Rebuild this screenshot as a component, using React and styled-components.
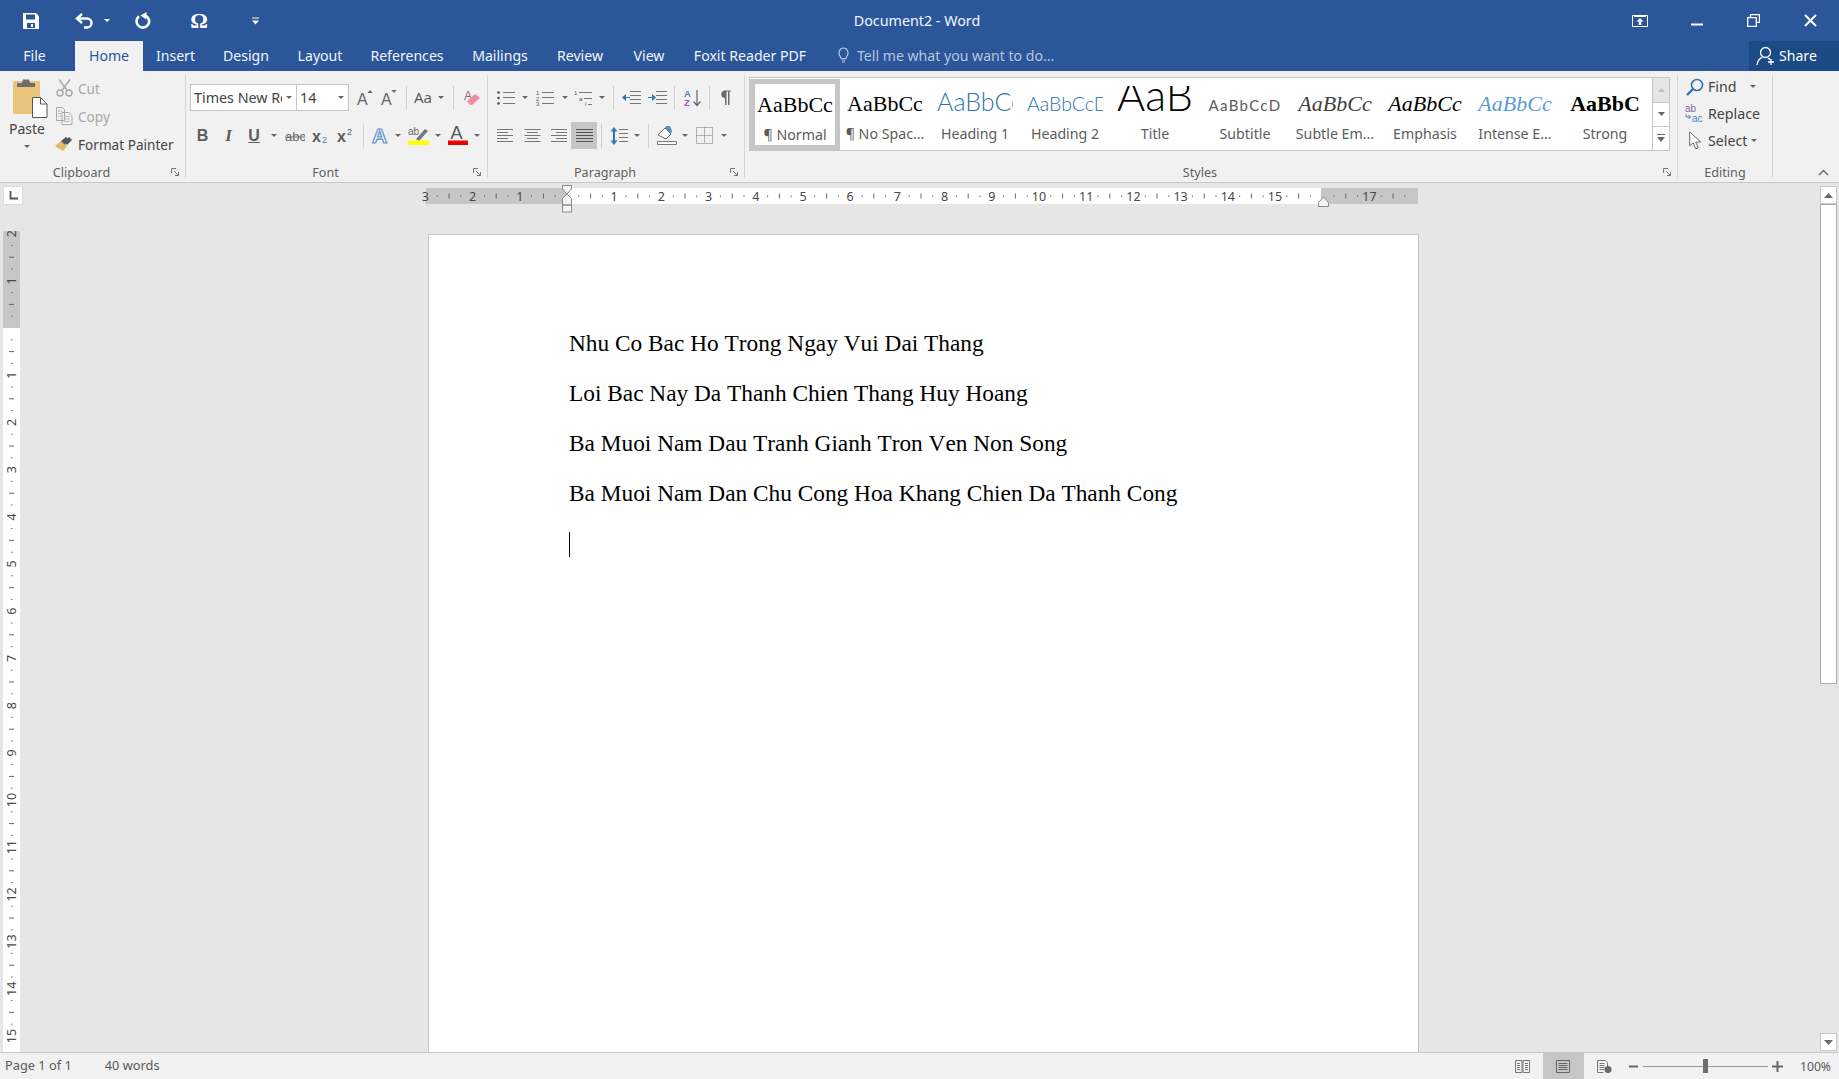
import React from "react";
import styled, { createGlobalStyle } from "styled-components";

const Global = createGlobalStyle`
  html, body { margin: 0; padding: 0; height: 100%; overflow: hidden; }
  body { font-family: "Noto Sans", "Open Sans", sans-serif; font-size: 13px; color: #444; }
  #root { height: 100%; }
`;

const Shell = styled.div`display:flex;flex-direction:column;height:1079px;width:1839px;overflow:hidden;background:#e6e6e6;`;

/* Title bar */
const TitleBar = styled.header`display:grid;grid-template-columns:1fr auto 1fr;align-items:center;height:41px;background:#2b579a;color:#fff;`;
const Qat = styled.div`display:flex;align-items:center;padding-left:17px;`;
const QatBtn = styled.span`display:flex;align-items:center;justify-content:center;width:${p=>p.$w||28}px;margin-left:${p=>p.$ml||0}px;height:30px;`;
const DocTitle = styled.div`font-size:14.3px;color:#f2f5fa;padding-right:5px;`;
const WinBtns = styled.div`display:flex;justify-content:flex-end;`;
const WinBtn = styled.span`display:flex;align-items:center;justify-content:center;width:57px;height:38px;`;
const OmegaGlyph = styled.span`font-family:"Liberation Serif",serif;font-weight:700;font-size:22px;color:#fff;line-height:1;`;

/* Tabs */
const TabRow = styled.nav`display:flex;align-items:stretch;height:30px;background:#2b579a;`;
const Tab = styled.span`display:flex;align-items:center;justify-content:center;box-sizing:border-box;padding-bottom:2px;width:${p=>p.$w}px;margin-right:${p=>p.$mr||0}px;font-size:14.1px;color:${p=>p.$on?'#2b579a':'#f1f4f9'};background:${p=>p.$on?'#f1f1f1':'transparent'};`;
const TellMe = styled.span`display:flex;align-items:center;gap:8px;margin-left:18px;padding-bottom:2px;font-size:14.1px;color:#b6c6df;`;
const Share = styled.span`display:flex;align-items:center;gap:3px;margin-left:auto;width:90px;padding:0 0 1px 7px;box-sizing:border-box;background:#1b4a85;color:#fff;font-size:14.1px;`;

/* Ribbon */
const Ribbon = styled.section`display:flex;height:112px;box-sizing:border-box;background:#f1f1f1;border-bottom:1px solid #c8c8c8;`;
const Group = styled.div`display:flex;flex-direction:column;flex:none;width:${p=>p.$w}px;`;
const GroupBody = styled.div`flex:1;min-height:0;padding:${p=>p.$pad||'13px 0 0 4px'};`;
const GroupFooter = styled.div`display:flex;align-items:center;height:20px;`;
const GroupLabel = styled.span`flex:1;text-align:center;font-size:12.6px;color:#5f5f5f;`;
const Launcher = styled.span`display:flex;align-items:center;justify-content:flex-end;box-sizing:border-box;width:22px;padding-right:6px;`;
const GroupDivider = styled.span`flex:none;width:1px;margin:4px 0;background:#d6d6d6;`;
const RibbonTail = styled.div`flex:1;display:flex;justify-content:flex-end;align-items:flex-end;padding:0 10px 6px 0;`;

const ClipLayout = styled.div`display:flex;`;
const PasteCol = styled.div`display:flex;flex-direction:column;align-items:center;width:54px;padding-top:8px;font-size:14px;color:#444;`;
const PasteArt = styled.span`display:block;margin-left:6px;`;
const PasteLabel = styled.span`margin:1px 0 6px;line-height:20px;`;
const ClipCol = styled.div`display:flex;flex-direction:column;padding-top:3px;`;
const ClipRow = styled.div`display:flex;align-items:center;height:28px;gap:5px;font-size:13.6px;color:${p=>p.$off?'#a8a8a8':'#444'};`;
const ClipIcon = styled.span`display:flex;justify-content:center;width:18px;margin-left:1px;`;

const ToolRow = styled.div`display:flex;height:27px;margin-bottom:11px;`;
const Tool = styled.span`display:flex;align-items:center;justify-content:center;flex:none;width:${p=>p.$w}px;height:27px;margin-left:${p=>p.$ml||0}px;background:${p=>p.$on?'#c6c6c6':'transparent'};`;
const Sep = styled.span`display:flex;align-items:center;justify-content:center;flex:none;width:${p=>p.$w}px;&::before{content:"";width:1px;height:24px;background:#d2d2d2;}`;
const Caret = styled.i`display:block;flex:none;width:0;height:0;border-left:3px solid transparent;border-right:3px solid transparent;border-top:3px solid ${p=>p.$c||'#666'};`;
const Combo = styled.span`display:flex;align-items:center;flex:none;box-sizing:border-box;width:${p=>p.$w}px;height:27px;margin-left:${p=>p.$ml||0}px;padding:0 4px 0 3px;background:#fff;border:1px solid #c6c6c6;font-size:14.3px;color:#444;`;
const ComboText = styled.span`flex:1;min-width:0;margin-right:4px;overflow:hidden;white-space:nowrap;`;
const GlyphBtn = styled.span`font-family:${p=>p.$sans?'"Noto Sans",sans-serif':p.$serif?'"Liberation Serif",serif':'"Liberation Sans",sans-serif'};font-weight:${p=>p.$b?700:400};font-style:${p=>p.$i?'italic':'normal'};text-decoration:${p=>p.$u?'underline':'none'};font-size:${p=>p.$s||15}px;color:#5c5c5c;line-height:1;`;

/* Styles gallery */
const Gallery = styled.div`display:flex;width:921px;height:74px;box-sizing:border-box;background:#fff;border:1px solid #c6c6c6;`;
const StyleItem = styled.div`display:flex;flex-direction:column;align-items:center;flex:none;box-sizing:border-box;width:90px;height:${p=>p.$on?'71px':'72px'};padding-top:${p=>p.$on?'3px':'8px'};border:${p=>p.$on?'5px solid #c6c6c6':'0'};margin-top:${p=>p.$on?'1px':'0'};`;
const SampleBox = styled.div`width:76px;height:34px;overflow:hidden;white-space:nowrap;text-align:center;font-size:20px;line-height:35px;`;
const Sample = styled.span`line-height:0;font-family:${p=>p.$f};font-size:${p=>p.$s}px;font-weight:${p=>p.$b||400};font-style:${p=>p.$i?'italic':'normal'};color:${p=>p.$c};letter-spacing:${p=>p.$ls||0}px;`;
const StyleLabel = styled.div`margin-top:4px;font-size:14.2px;color:#5c5c5c;white-space:nowrap;line-height:20px;`;
const GalleryScroll = styled.div`display:flex;flex-direction:column;margin-left:2px;width:17px;border-left:1px solid #c6c6c6;`;
const ScrollCell = styled.span`display:flex;align-items:center;justify-content:center;height:${p=>p.$h}px;background:${p=>p.$off?'#e6e6e6':'#fff'};border-bottom:${p=>p.$last?'0':'1px solid #c6c6c6'};`;

const EditCol = styled.div`display:flex;flex-direction:column;padding:2px 0 0 8px;`;
const EditRow = styled.div`display:flex;align-items:center;height:27px;gap:4px;font-size:14.2px;color:#444;`;
const EditIcon = styled.span`display:flex;justify-content:center;width:18px;`;

/* Workspace */
const Workspace = styled.main`flex:1;min-height:0;display:flex;background:#e6e6e6;overflow:hidden;`;
const LeftRail = styled.div`display:flex;flex-direction:column;flex:none;width:24px;`;
const CornerBtn = styled.span`display:flex;align-items:center;justify-content:center;width:18px;height:17px;margin:3px 0 0 3px;background:#fff;border:1px solid #dcdcdc;`;
const VRulerWrap = styled.div`flex:1;min-height:0;margin:26px 0 0 3px;overflow:hidden;`;
const Center = styled.div`flex:1;min-width:0;display:flex;flex-direction:column;padding-left:401px;`;
const HRulerWrap = styled.div`height:30px;margin-top:1px;flex:none;`;
const Page = styled.article`flex:1;box-sizing:border-box;width:991px;margin:20px 0 0 3px;padding:83px 0 0 140px;background:#fff;border:1px solid #c6c6c6;border-bottom:0;font-family:"Liberation Serif",serif;font-size:23.33px;font-kerning:none;color:#000;`;
const Para = styled.p`margin:0;height:50px;line-height:50px;white-space:nowrap;`;
const Caretline = styled.span`display:block;width:1px;height:25px;margin-top:14px;background:#000;`;
const VScroll = styled.aside`display:flex;flex-direction:column;flex:none;width:17px;margin:3px 2px 1px 0;`;
const ScrollBtn = styled.span`display:flex;align-items:center;justify-content:center;flex:none;box-sizing:border-box;height:18px;background:#fff;border:1px solid #c6c6c6;`;
const ScrollThumb = styled.span`display:block;flex:none;box-sizing:border-box;height:480px;background:#fff;border:1px solid #ababab;`;
const ScrollGap = styled.span`flex:1;`;

/* Status */
const Status = styled.footer`display:flex;align-items:center;height:27px;box-sizing:border-box;padding:0 0 0 5px;background:#f1f1f1;border-top:1px solid #c6c6c6;font-size:12.8px;color:#5a5a5a;`;
const StatusText = styled.span`margin-left:${p=>p.$ml||0}px;padding-bottom:2px;`;
const StatusRight = styled.div`display:flex;align-items:stretch;height:26px;margin-left:auto;padding-right:8px;`;
const StatusBtn = styled.span`display:flex;align-items:center;justify-content:center;flex:none;width:${p=>p.$w||41}px;background:${p=>p.$on?'#c6c6c6':'transparent'};`;
const Slider = styled.span`display:flex;align-items:center;justify-content:center;width:125px;background:linear-gradient(#9a9a9a,#9a9a9a) center/100% 1px no-repeat;`;
const SliderThumb = styled.span`display:block;width:5px;height:14px;background:#6f6f6f;`;
const Zoom = styled.span`display:flex;align-items:center;margin-left:12px;font-size:12.2px;`;

/* Icons */
const Ic = ({w=16,h=16,children,vb})=> <svg width={w} height={h} viewBox={vb||`0 0 ${w} ${h}`} style={{display:"block",flex:"none"}}>{children}</svg>;

const SaveIcon = ()=> <Ic><path fill="#fff" fillRule="evenodd" d="M0 0h13l3 3v13H0zM3 1.500v5h9v-5zM4 10v5h8v-5zM8 11h2v3H8z"/></Ic>;
const UndoIcon = ()=> <Ic w={19} h={17}><path d="M7 2 2 6.500 7 11" fill="none" stroke="#fff" strokeWidth="2.400"/><path d="M3 6.500h9a4.500 4.500 0 0 1 0 9H9" fill="none" stroke="#fff" strokeWidth="2.400"/></Ic>;
const RedoIcon = ()=> <Ic w={17} h={17}><path d="M5 4.300a6.300 6.300 0 1 0 6.500-.7" fill="none" stroke="#fff" strokeWidth="2.600"/><path d="M12.500 0v7.500L6.500 3.500z" fill="#fff"/></Ic>;
const CustomIcon = ()=> <Ic w={7} h={8}><path d="M0 1h7" stroke="#fff"/><path d="M0 3.500h7L3.500 7.500z" fill="#fff"/></Ic>;
const DisplayIcon = ()=> <Ic w={16} h={12}><path d="M.5.500h15v11H.5z" fill="none" stroke="#fff"/><path d="M2 1.500h12" stroke="#fff"/><path d="M8 3l3.500 3.500H9.300V10H6.700V6.500H4.500z" fill="#fff"/></Ic>;
const MinIcon = ()=> <Ic w={12} h={12}><path d="M0 9.500h12" stroke="#fff" strokeWidth="2"/></Ic>;
const RestoreIcon = ()=> <Ic w={13} h={13}><path d="M3.500 3V.7h9v7.600H9.600M.7 3.700h8.600v8.600H.7z" fill="none" stroke="#fff" strokeWidth="1.300"/></Ic>;
const CloseIcon = ()=> <Ic w={13} h={13}><path d="M1 1l11 11M12 1 1 12" stroke="#fff" strokeWidth="2"/></Ic>;
const BulbIcon = ()=> <Ic w={11} h={16}><path d="M2.500 10C-.5 6 1.500 1 5.500 1s6 5 3 9l-.5 1.500H3z" fill="none" stroke="#b6c6df" strokeWidth="1.200"/><path d="M3.500 13h4M4 15h3" stroke="#b6c6df"/></Ic>;
const ShareIcon = ()=> <Ic w={20} h={20}><circle cx="9.500" cy="6.500" r="5" fill="none" stroke="#fff" strokeWidth="1.300"/><path d="M1 19c.5-4 2.500-6.500 5-7.700M12 12.200c1 .4 1.800 1 2.500 1.800" fill="none" stroke="#fff" strokeWidth="1.300"/><path d="M15 13v6M12 16h6" stroke="#fff" strokeWidth="1.300"/></Ic>;

const PasteIcon = ()=> <Ic w={35} h={39}>
  <rect x="0" y="2" width="27" height="33" rx="1.500" fill="#ebc47c"/>
  <path d="M4 4h5l1-3.500h6L17 4h5v4H4z" fill="#6d6d6d"/>
  <path d="M19.500 18.500h8l6.500 6.500v13.500H19.500z" fill="#fff" stroke="#555"/>
  <path d="M27.500 18.500v6.500h6.500" fill="none" stroke="#555"/>
</Ic>;
const CutIcon = ()=> <Ic w={17} h={18}><circle cx="4" cy="14" r="3" fill="none" stroke="#a8a8a8" strokeWidth="1.400"/><circle cx="13" cy="14" r="3" fill="none" stroke="#a8a8a8" strokeWidth="1.400"/><path d="M3 .5l8.500 11.500M14 .5 5.500 12" stroke="#a8a8a8" strokeWidth="1.400"/></Ic>;
const CopyIcon = ()=> <Ic w={17} h={18}><path d="M.5.500h6l2 2v11H.5zM6 5.500h7l3 3v9H6z" fill="#f1f1f1" stroke="#a8a8a8"/><path d="M2 4h4M2 6.500h3M2 9h3M8 9.500h6M8 12h6M8 14.500h6" stroke="#bbb"/></Ic>;
const PainterIcon = ()=> <Ic w={18} h={16}><path d="M0 10l6-5 6 5-4 5z" fill="#e2b867"/><path d="M6 5l5-4 1.500 1L10 9z" fill="#555"/><path d="M9 6l5-5 3 3-5 5z" fill="#555"/></Ic>;
const GrowIcon = ({down})=> <Ic w={16} h={19}><text x="0" y="17" fontFamily="Liberation Sans" fontSize="16" fill="#666">A</text><path d={down?"M10.500 2h5L13 5z":"M10.500 5h5L13 2z"} fill="#666"/></Ic>;
const ClearIcon = ()=> <Ic w={17} h={18}><text x="0" y="11" fontFamily="Liberation Sans" fontSize="12" fill="#777">A</text><path d="M3 12l8-7 5 4-8 7H6z" fill="#ef8d9c"/></Ic>;
const SubIcon = ({sup})=> <Ic w={16} h={16}><text x="0" y="14" fontFamily="Liberation Sans" fontWeight="700" fontSize="16" fill="#5c5c5c">x</text><text x="10" y={sup?7:15} fontFamily="Liberation Sans" fontSize="9" fill={sup?"#5c5c5c":"#5b7fa8"}>2</text></Ic>;
const StrikeIcon = ()=> <Ic w={20} h={14}><text x="0" y="12" fontFamily="Liberation Sans" fontSize="13" fill="#6a6a6a">abc</text><path d="M0 8h20" stroke="#6a6a6a"/></Ic>;
const EffectIcon = ()=> <Ic w={18} h={20}><text x="0" y="17" fontFamily="Liberation Sans" fontWeight="700" fontSize="21" fill="#fff" stroke="#5b8fc9" strokeWidth="1.200">A</text></Ic>;
const HiliteIcon = ()=> <Ic w={21} h={19}><text x="0" y="9" fontFamily="Liberation Sans" fontSize="10" fill="#666">ab</text><path d="M8 13 17 3l3 2-9 10z" fill="#777"/><path d="M0 14.500h21V19H0z" fill="#ffff00"/></Ic>;
const ColorIcon = ()=> <Ic w={20} h={19}><text x="2.500" y="13" fontFamily="Liberation Sans" fontSize="18" fill="#555">A</text><path d="M0 14.500h20V19H0z" fill="#f00000"/></Ic>;

const Lines = ({x,ys,l,c="#777"})=> <>{ys.map((y,i)=><path key={i} d={`M${x} ${y+.5}h${l}`} stroke={c}/>)}</>;
const Tiny = ({x,y,t,c="#555"})=> <text x={x} y={y} fontFamily="Liberation Sans" fontSize="6" fill={c}>{t}</text>;
const BulletIcon = ()=> <Ic w={18} h={16}><circle cx="1.500" cy="2.500" r="1.300" fill="#44546a"/><circle cx="1.500" cy="8" r="1.300" fill="#44546a"/><circle cx="1.500" cy="13.500" r="1.300" fill="#44546a"/><Lines x={6} ys={[2,7,13]} l={12}/></Ic>;
const NumberIcon = ()=> <Ic w={18} h={16}><Tiny x={0} y={5} t="1"/><Tiny x={0} y={10.500} t="2"/><Tiny x={0} y={16} t="3"/><Lines x={6} ys={[2,7,13]} l={12}/></Ic>;
const MultiIcon = ()=> <Ic w={19} h={16}><Tiny x={0} y={5} t="1"/><Tiny x={5} y={10.500} t="a" c="#44546a"/><Tiny x={11} y={16} t="i"/><Lines x={5} ys={[2]} l={13}/><Lines x={10} ys={[8]} l={8}/><Lines x={14} ys={[14]} l={4}/></Ic>;
const IndentIcon = ({inc})=> <Ic w={19} h={15}><Lines x={8} ys={[1,5,9,13]} l={11}/><path d={inc?"M0 7h4V4l4 3.500L4 11V8H0z":"M8 7H4V4L0 7.500 4 11V8h4z"} fill="#2f74b5"/></Ic>;
const SortIcon = ()=> <Ic w={18} h={18}><text x="0" y="8" fontFamily="Liberation Sans" fontWeight="700" fontSize="9.500" fill="#4f81bd">A</text><text x="0" y="17" fontFamily="Liberation Sans" fontWeight="700" fontSize="9.500" fill="#8e5fa8">Z</text><path d="M13 1v15M9.500 12.500 13 16.500l3.500-4" fill="none" stroke="#666" strokeWidth="1.200"/></Ic>;
const PilcrowIcon = ()=> <Ic w={11} h={15}><path d="M4.500 8A3.800 3.800 0 0 1 4.500.5H11v1H9.500V15H8V1.500H6.500V15H5V8z" fill="#6a6a6a"/></Ic>;
const AlignIcon = ({mode})=> { const ys=[1,4,7,10,13]; const ls=mode==="j"?[17,17,17,17,17]:[16,11,16,11,16]; return <Ic w={17} h={15}>{ys.map((y,i)=>{const x=mode==="c"?(17-ls[i])/2:mode==="r"?17-ls[i]:0;return <path key={y} d={`M${x} ${y+.5}h${ls[i]}`} stroke={mode==="j"?"#555":"#777"}/>})}</Ic>; };
const SpacingIcon = ()=> <Ic w={18} h={18}><path d="M4 0l3.500 4.500H5V13.500h2.500L4 18 .5 13.500H3V4.500H.5z" fill="#2f74b5"/><Lines x={9} ys={[2,6,10,14]} l={9}/></Ic>;
const ShadeIcon = ()=> <Ic w={20} h={19}><path d="M1 9 8 2l6 6-5 5z" fill="#fff" stroke="#6a6a6a"/><path d="M8 2 9 0h4l2 5-1 3z" fill="#5b8fc9"/><path d="M.5 15.500h19v3H.5z" fill="#fff" stroke="#777"/></Ic>;
const BorderIcon = ()=> <Ic w={17} h={17}><path d="M.5.500h16v16H.5zM8.500.5v16M.5 8.500h16" fill="none" stroke="#777" strokeDasharray="1 1"/></Ic>;
const LaunchIcon = ()=> <Ic w={8} h={8}><path d="M.5 5V.5H5M3 3l4.500 4.500M4 7.500h3.500V4" fill="none" stroke="#777"/></Ic>;
const FindIcon = ()=> <Ic w={18} h={18}><circle cx="11" cy="7" r="5.500" fill="none" stroke="#2f74b5" strokeWidth="1.600"/><path d="M7 11 1 17" stroke="#2f74b5" strokeWidth="2.400"/></Ic>;
const ReplaceIcon = ()=> <Ic w={20} h={19}><text x="0" y="8" fontFamily="Liberation Sans" fontSize="10" fill="#8e5fa8">ab</text><text x="7" y="18" fontFamily="Liberation Sans" fontSize="10" fill="#4f81bd">ac</text><path d="M1 10v3h4M3.500 11 5.500 13l-2 2" fill="none" stroke="#4f81bd"/></Ic>;
const SelectIcon = ()=> <Ic w={13} h={19}><path d="M.7.8v14l3.500-3 2.500 6 2.500-1-2.500-5.800h5z" fill="#fff" stroke="#666"/></Ic>;
const ChevronIcon = ()=> <Ic w={11} h={7}><path d="M1 6l4.500-4.500L10 6" fill="none" stroke="#666" strokeWidth="1.400"/></Ic>;
const TabStopIcon = ()=> <Ic w={9} h={9}><path d="M1.500 0v7.500H9" fill="none" stroke="#555" strokeWidth="1.800"/></Ic>;
const TriUp = ()=> <Ic w={9} h={5}><path d="M0 5 4.500 0 9 5z" fill="#6a6a6a"/></Ic>;
const TriDown = ()=> <Ic w={9} h={5}><path d="M0 0l4.500 5L9 0z" fill="#6a6a6a"/></Ic>;
const SmallUp = ()=> <Ic w={7} h={4}><path d="M0 4 3.500 0 7 4z" fill="#c0c0c0"/></Ic>;
const SmallDown = ()=> <Ic w={7} h={4}><path d="M0 0l3.500 4L7 0z" fill="#666"/></Ic>;
const MoreIcon = ()=> <Ic w={8} h={8}><path d="M0 .5h8" stroke="#666"/><path d="M0 3h8L4 8z" fill="#666"/></Ic>;
const ReadIcon = ()=> <Ic w={15} h={13}><path d="M.5.500h6.500v12H.5zM8 .5h6.500v12H8z" fill="none" stroke="#777"/><Lines x={2} ys={[3,5,7,9]} l={3}/><Lines x={10} ys={[3,5,7,9]} l={3}/></Ic>;
const PrintIcon = ()=> <Ic w={14} h={13}><path d="M.5.500h13v12H.5z" fill="none" stroke="#666"/><Lines x={2.500} ys={[3,5,7,9]} l={9} c="#666"/></Ic>;
const WebIcon = ()=> <Ic w={15} h={13}><path d="M.5.500h8l2 2v4M.5.500v12h6" fill="none" stroke="#777"/><Lines x={2.500} ys={[3,5,7,9]} l={5}/><circle cx="11" cy="9.500" r="3.500" fill="#6a6a6a"/></Ic>;
const MinusIcon = ()=> <Ic w={9} h={3}><path d="M0 1.500h9" stroke="#666" strokeWidth="2"/></Ic>;
const PlusIcon = ()=> <Ic w={11} h={11}><path d="M0 5.500h11M5.500 0v11" stroke="#666" strokeWidth="2"/></Ic>;

/* Rulers */
const CM = 47.2;
const HRuler = ()=> {
  const ox = 142; // origin inside the drawing (x = 567 on the page)
  const marks = [];
  for (let q = -12; q <= 71; q++) {
    const x = ox + q * CM / 4;
    const r = ((q % 4) + 4) % 4;
    if (r === 0) { const n = Math.abs(q/4); if (n !== 0 && n !== 16) marks.push(<text key={q} x={x} y={16.500} textAnchor="middle" fontFamily="Noto Sans" fontSize="12.500" fill="#484848">{n}</text>); }
    else if (r === 2) marks.push(<path key={q} d={`M${x} 9.500v5`} stroke="#666"/>);
    else marks.push(<path key={q} d={`M${x} 11.500v1.500`} stroke="#666"/>);
  }
  return <svg width="996" height="30" style={{display:"block",overflow:"visible"}}>
    <rect x="1" y="4" width="141" height="16" fill="#c6c6c6"/>
    <rect x="142" y="4" width="754" height="16" fill="#fff"/>
    <rect x="896" y="4" width="97" height="16" fill="#c6c6c6"/>
    {marks}
    <path d="M137.500 1.500h9v3.500l-4.500 5-4.500-5zM137.500 21v-6.500l4.500-4.500 4.500 4.500V21zM137.500 21h9v7h-9z" fill="#f4f4f4" stroke="#8a8a8a"/>
    <path d="M893.500 22.500v-4l5-5.500 5 5.500v4z" fill="#f4f4f4" stroke="#8a8a8a"/>
  </svg>;
};
const VRuler = ()=> {
  const oy = 97;
  const marks = [];
  for (let q = -8; q <= 60; q++) {
    const y = oy + q * CM / 4;
    const r = ((q % 4) + 4) % 4;
    if (r === 0) { const n = Math.abs(q/4); if (n !== 0) marks.push(<text key={q} transform={`translate(12.500 ${y}) rotate(-90)`} textAnchor="middle" fontFamily="Noto Sans" fontSize="12.500" fill="#484848">{n}</text>); }
    else if (r === 2) marks.push(<path key={q} d={`M6 ${y}h5`} stroke="#666"/>);
    else marks.push(<path key={q} d={`M8 ${y}h1.500`} stroke="#666"/>);
  }
  return <svg width="17" height="830" style={{display:"block"}}>
    <rect x="0" y="0" width="17" height="97" fill="#c6c6c6"/>
    <rect x="0" y="97" width="17" height="733" fill="#fff"/>
    {marks}
  </svg>;
};

const tabs = [["File",69,false,6],["Home",68,true],["Insert",65],["Design",76],["Layout",72],["References",102],["Mailings",84],["Review",76],["View",62],["Foxit Reader PDF",140]];
const serif = '"Liberation Serif",serif';
const sans = '"Lato","Open Sans",sans-serif';
const styles = [
  {label:"¶ Normal",text:"AaBbCc",f:serif,s:22,c:"#000",on:true},
  {label:"¶ No Spac...",text:"AaBbCc",f:serif,s:22,c:"#000"},
  {label:"Heading 1",text:"AaBbCc",f:sans,s:25,c:"#2e74b5",b:300},
  {label:"Heading 2",text:"AaBbCcD",f:sans,s:19.500,c:"#2e74b5",b:300},
  {label:"Title",text:"AaB",f:sans,s:43,c:"#000",b:300},
  {label:"Subtitle",text:"AaBbCcD",f:sans,s:15,c:"#5a5a5a",ls:1.300},
  {label:"Subtle Em...",text:"AaBbCc",f:serif,s:22,c:"#404040",i:true},
  {label:"Emphasis",text:"AaBbCc",f:serif,s:22,c:"#000",i:true},
  {label:"Intense E...",text:"AaBbCc",f:serif,s:22,c:"#5b9bd5",i:true},
  {label:"Strong",text:"AaBbC",f:serif,s:22,c:"#000",b:700},
];
const lines = ["Nhu Co Bac Ho Trong Ngay Vui Dai Thang","Loi Bac Nay Da Thanh Chien Thang Huy Hoang","Ba Muoi Nam Dau Tranh Gianh Tron Ven Non Song","Ba Muoi Nam Dan Chu Cong Hoa Khang Chien Da Thanh Cong"];

export default function App(){
  return <Shell>
    <Global/>
    <TitleBar>
      <Qat>
        <QatBtn><SaveIcon/></QatBtn>
        <QatBtn $ml={25}><UndoIcon/></QatBtn>
        <QatBtn $w={18}><Caret $c="#fff"/></QatBtn>
        <QatBtn $ml={12}><RedoIcon/></QatBtn>
        <QatBtn $ml={29}><OmegaGlyph>Ω</OmegaGlyph></QatBtn>
        <QatBtn $ml={28}><CustomIcon/></QatBtn>
      </Qat>
      <DocTitle>Document2 - Word</DocTitle>
      <WinBtns>
        <WinBtn><DisplayIcon/></WinBtn>
        <WinBtn><MinIcon/></WinBtn>
        <WinBtn><RestoreIcon/></WinBtn>
        <WinBtn><CloseIcon/></WinBtn>
      </WinBtns>
    </TitleBar>
    <TabRow>
      {tabs.map(([t,w,on,mr])=><Tab key={t} $w={w} $on={on} $mr={mr}>{t}</Tab>)}
      <TellMe><BulbIcon/>Tell me what you want to do...</TellMe>
      <Share><ShareIcon/>Share</Share>
    </TabRow>
    <Ribbon>
      <Group $w={185}>
        <GroupBody $pad="0">
          <ClipLayout>
            <PasteCol><PasteArt><PasteIcon/></PasteArt><PasteLabel>Paste</PasteLabel><Caret/></PasteCol>
            <ClipCol>
              <ClipRow $off><ClipIcon><CutIcon/></ClipIcon>Cut</ClipRow>
              <ClipRow $off><ClipIcon><CopyIcon/></ClipIcon>Copy</ClipRow>
              <ClipRow><ClipIcon><PainterIcon/></ClipIcon>Format Painter</ClipRow>
            </ClipCol>
          </ClipLayout>
        </GroupBody>
        <GroupFooter><GroupLabel>Clipboard</GroupLabel><Launcher><LaunchIcon/></Launcher></GroupFooter>
      </Group>
      <GroupDivider/>
      <Group $w={301}>
        <GroupBody>
          <ToolRow>
            <Combo $w={107}><ComboText>Times New Roman</ComboText><Caret/></Combo>
            <Combo $w={53} $ml={-1}><ComboText>14</ComboText><Caret/></Combo>
            <Tool $w={24} $ml={4}><GrowIcon/></Tool>
            <Tool $w={24}><GrowIcon down/></Tool>
            <Sep $w={10}/>
            <Tool $w={24}><GlyphBtn $sans $s={15}>Aa</GlyphBtn></Tool>
            <Tool $w={12}><Caret/></Tool>
            <Sep $w={12}/>
            <Tool $w={26}><ClearIcon/></Tool>
          </ToolRow>
          <ToolRow>
            <Tool $w={25}><GlyphBtn $b $s={16}>B</GlyphBtn></Tool>
            <Tool $w={27}><GlyphBtn $b $i $serif $s={17}>I</GlyphBtn></Tool>
            <Tool $w={24}><GlyphBtn $b $u $s={16}>U</GlyphBtn></Tool>
            <Tool $w={16}><Caret/></Tool>
            <Tool $w={25}><StrikeIcon/></Tool>
            <Tool $w={25}><SubIcon/></Tool>
            <Tool $w={25}><SubIcon sup/></Tool>
            <Sep $w={12}/>
            <Tool $w={24}><EffectIcon/></Tool>
            <Tool $w={10}><Caret/></Tool>
            <Tool $w={30}><HiliteIcon/></Tool>
            <Tool $w={10}><Caret/></Tool>
            <Tool $w={29}><ColorIcon/></Tool>
            <Tool $w={10}><Caret/></Tool>
          </ToolRow>
        </GroupBody>
        <GroupFooter><GroupLabel>Font</GroupLabel><Launcher><LaunchIcon/></Launcher></GroupFooter>
      </Group>
      <GroupDivider/>
      <Group $w={256}>
        <GroupBody>
          <ToolRow>
            <Tool $w={28}><BulletIcon/></Tool><Tool $w={10}><Caret/></Tool>
            <Tool $w={30}><NumberIcon/></Tool><Tool $w={9}><Caret/></Tool>
            <Tool $w={28}><MultiIcon/></Tool><Tool $w={10}><Caret/></Tool>
            <Sep $w={12}/>
            <Tool $w={24}><IndentIcon/></Tool>
            <Tool $w={28}><IndentIcon inc/></Tool>
            <Sep $w={6}/>
            <Tool $w={32}><SortIcon/></Tool>
            <Sep $w={1}/>
            <Tool $w={30}><PilcrowIcon/></Tool>
          </ToolRow>
          <ToolRow>
            <Tool $w={27}><AlignIcon mode="l"/></Tool>
            <Tool $w={27}><AlignIcon mode="c"/></Tool>
            <Tool $w={25}><AlignIcon mode="r"/></Tool>
            <Tool $w={26} $on><AlignIcon mode="j"/></Tool>
            <Sep $w={8}/>
            <Tool $w={28}><SpacingIcon/></Tool><Tool $w={8}><Caret/></Tool>
            <Sep $w={14}/>
            <Tool $w={23}><ShadeIcon/></Tool><Tool $w={14}><Caret/></Tool>
            <Tool $w={25}><BorderIcon/></Tool><Tool $w={14}><Caret/></Tool>
          </ToolRow>
        </GroupBody>
        <GroupFooter><GroupLabel>Paragraph</GroupLabel><Launcher><LaunchIcon/></Launcher></GroupFooter>
      </Group>
      <GroupDivider/>
      <Group $w={932}>
        <GroupBody $pad="6px 0 0 4px">
          <Gallery>
            {styles.map(s=><StyleItem key={s.label} $on={s.on}>
              <SampleBox><Sample $f={s.f} $s={s.s} $c={s.c} $b={s.b} $i={s.i} $ls={s.ls}>{s.text}</Sample></SampleBox>
              <StyleLabel>{s.label}</StyleLabel>
            </StyleItem>)}
            <GalleryScroll>
              <ScrollCell $h={25} $off><SmallUp/></ScrollCell>
              <ScrollCell $h={23}><SmallDown/></ScrollCell>
              <ScrollCell $h={24} $last><MoreIcon/></ScrollCell>
            </GalleryScroll>
          </Gallery>
        </GroupBody>
        <GroupFooter><GroupLabel>Styles</GroupLabel><Launcher><LaunchIcon/></Launcher></GroupFooter>
      </Group>
      <GroupDivider/>
      <Group $w={94}>
        <GroupBody $pad="0">
          <EditCol>
            <EditRow><EditIcon><FindIcon/></EditIcon>Find<Tool $w={24}><Caret/></Tool></EditRow>
            <EditRow><EditIcon><ReplaceIcon/></EditIcon>Replace</EditRow>
            <EditRow><EditIcon><SelectIcon/></EditIcon>Select<Caret/></EditRow>
          </EditCol>
        </GroupBody>
        <GroupFooter><GroupLabel>Editing</GroupLabel></GroupFooter>
      </Group>
      <GroupDivider/>
      <RibbonTail><ChevronIcon/></RibbonTail>
    </Ribbon>
    <Workspace>
      <LeftRail>
        <CornerBtn><TabStopIcon/></CornerBtn>
        <VRulerWrap><VRuler/></VRulerWrap>
      </LeftRail>
      <Center>
        <HRulerWrap><HRuler/></HRulerWrap>
        <Page>
          {lines.map(l=><Para key={l}>{l}</Para>)}
          <Para><Caretline/></Para>
        </Page>
      </Center>
      <VScroll>
        <ScrollBtn><TriUp/></ScrollBtn>
        <ScrollThumb/>
        <ScrollGap/>
        <ScrollBtn><TriDown/></ScrollBtn>
      </VScroll>
    </Workspace>
    <Status>
      <StatusText>Page 1 of 1</StatusText>
      <StatusText $ml={33}>40 words</StatusText>
      <StatusRight>
        <StatusBtn><ReadIcon/></StatusBtn>
        <StatusBtn $on><PrintIcon/></StatusBtn>
        <StatusBtn><WebIcon/></StatusBtn>
        <StatusBtn $w={18}><MinusIcon/></StatusBtn>
        <Slider><SliderThumb/></Slider>
        <StatusBtn $w={20}><PlusIcon/></StatusBtn>
        <Zoom>100%</Zoom>
      </StatusRight>
    </Status>
  </Shell>;
}
